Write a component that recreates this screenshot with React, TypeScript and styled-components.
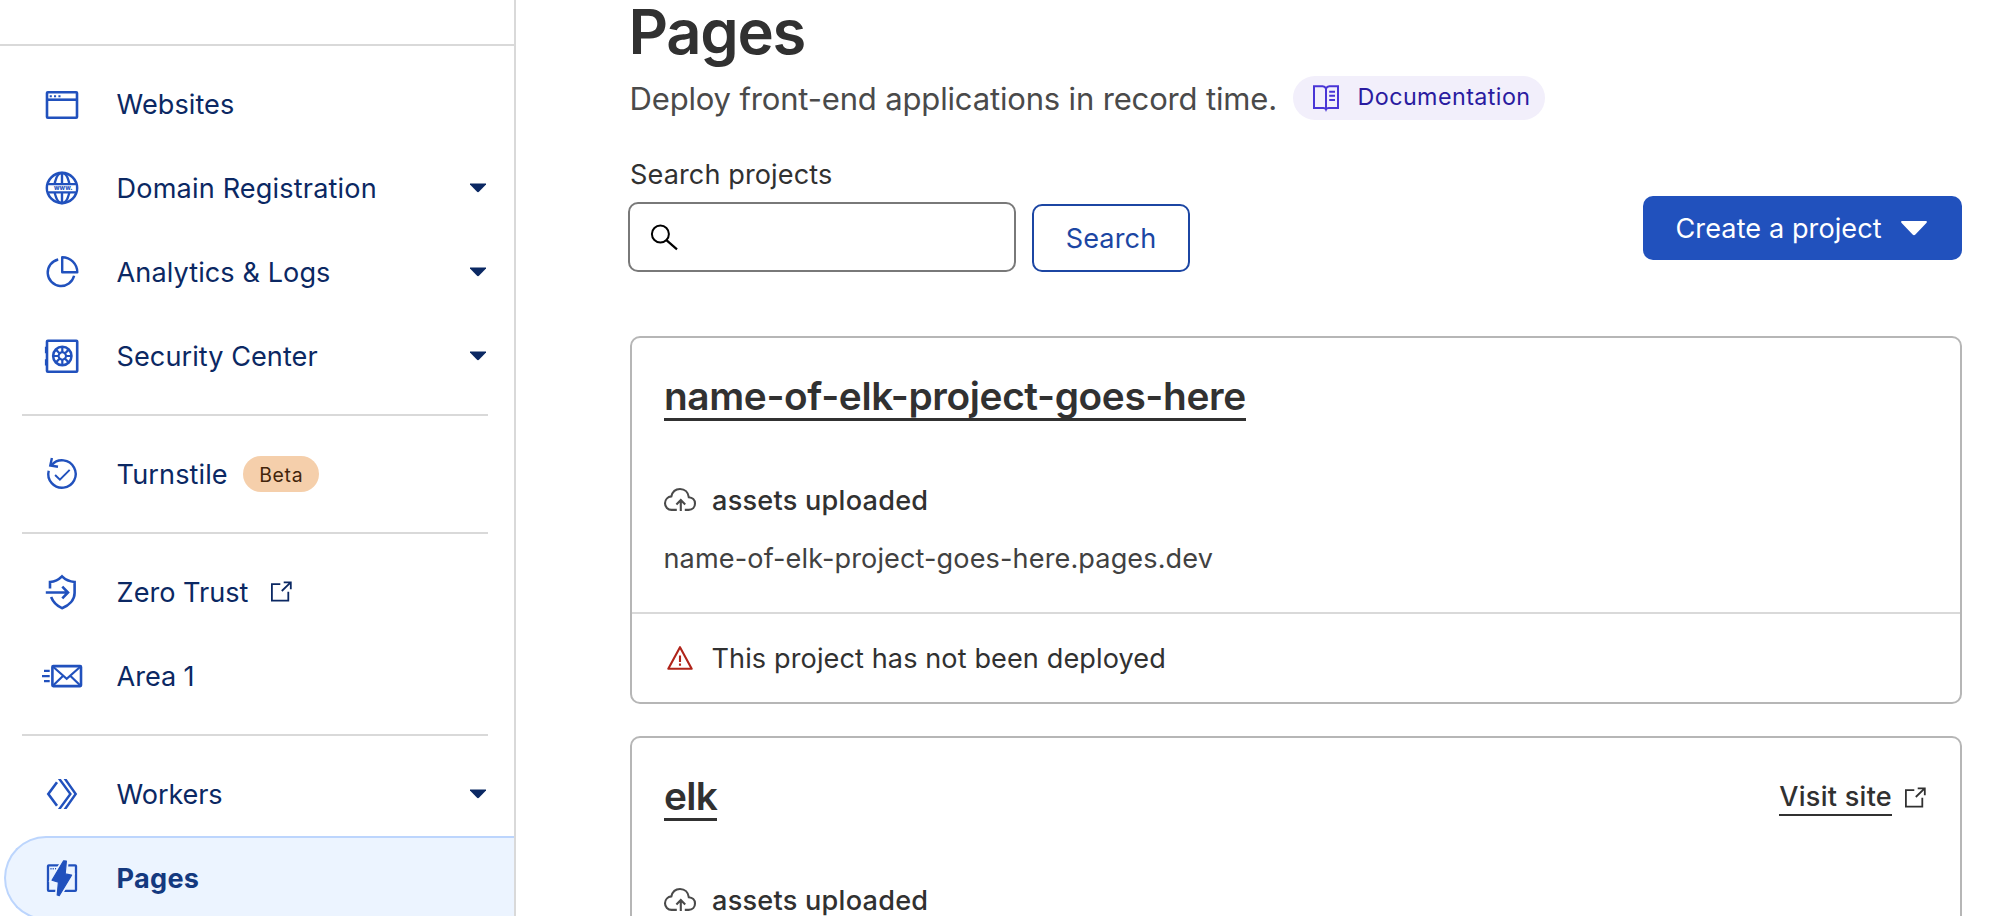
import React from "react";
import styled, { createGlobalStyle } from "styled-components";

const GlobalStyle = createGlobalStyle`
  *, *::before, *::after { box-sizing: border-box; }
  html, body { margin: 0; padding: 0; background: #fff; }
  body {
    font-family: Inter, "Liberation Sans", sans-serif;
    font-size: 27.1px;
    letter-spacing: 0.1px;
    color: #313131;
    overflow: hidden;
  }
  svg { display: block; flex: none; overflow: visible; }
`;

const Page = styled.div`
  display: flex;
  height: 916px;
  overflow: hidden;
`;

/* Sidebar */

const Sidebar = styled.nav`
  width: 516px;
  flex: none;
  border-right: 2px solid #d9d9d9;
  overflow: hidden;
`;

const SidebarTop = styled.div`
  height: 46px;
  border-bottom: 2px solid #d9d9d9;
  margin-bottom: 16px;
`;

const Divider = styled.hr`
  height: 2px;
  margin: 16px 26px 16px 22px;
  border: 0;
  background: #d9d9d9;
`;

const NavItem = styled.a<{ $active?: boolean }>`
  display: flex;
  align-items: center;
  height: 84px;
  margin-left: ${(p) => (p.$active ? "4px" : "0")};
  padding: 0 28px 0 ${(p) => (p.$active ? "35px" : "41px")};
  color: ${(p) => (p.$active ? "#14397f" : "#0b2863")};
  font-weight: ${(p) => (p.$active ? 700 : 400)};
  letter-spacing: ${(p) => (p.$active ? "0.27px" : "inherit")};
  background: ${(p) => (p.$active ? "#ecf4ff" : "transparent")};
  border: ${(p) => (p.$active ? "2px solid #bcd5fd" : "0")};
  border-right: 0;
  border-radius: ${(p) => (p.$active ? "42px 0 0 42px" : "0")};
`;

const NavLabel = styled.span<{ $spacing?: number }>`
  margin-left: 33.6px;
  white-space: nowrap;
  letter-spacing: ${(p) => (p.$spacing === undefined ? "inherit" : `${p.$spacing}px`)};
`;

const Beta = styled.span`
  display: inline-flex;
  align-items: center;
  justify-content: center;
  width: 76px;
  height: 36px;
  margin-left: 15.5px;
  padding-top: 2px;
  border-radius: 18px;
  background: #f5cfab;
  color: #43250b;
  font-size: 19.4px;
  letter-spacing: 0.69px;
`;

const CaretSlot = styled.span`
  margin-left: auto;
`;

const LinkIconSlot = styled.span`
  margin: 0 0 2px 22.5px;
`;

/* Main column */

const Main = styled.main`
  flex: 1;
  padding: 0 44px 0 114px;
`;

const Title = styled.h1`
  margin: 0 0 12px -1.5px;
  font-size: 61.5px;
  line-height: 64px;
  font-weight: 600;
  letter-spacing: -1.3px;
`;

const Intro = styled.div`
  display: flex;
  align-items: center;
  height: 44px;
  gap: 16px;
`;

const Description = styled.p`
  margin: 1px 0 0 -0.5px;
  width: 647.5px;
  font-size: 31px;
  letter-spacing: -0.16px;
  color: #4a4a4a;
  white-space: nowrap;
`;

const DocLink = styled.a`
  display: flex;
  align-items: center;
  gap: 18.5px;
  height: 44px;
  width: 252px;
  padding-left: 20px;
  border-radius: 22px;
  background: #f2effb;
  color: #2a1ba0;
  font-size: 23.3px;
  line-height: 28px;
  letter-spacing: 0.43px;
`;

const DocLabel = styled.span`
  padding-bottom: 2px;
`;

const Toolbar = styled.div`
  display: flex;
  justify-content: space-between;
  margin-top: 36px;
  height: 116px;
`;

const SearchLabel = styled.label`
  display: block;
  padding-top: 1px;
  margin-bottom: 9px;
  line-height: 36px;
`;

const SearchRow = styled.div`
  display: flex;
  align-items: flex-end;
  gap: 16px;
  margin-left: -2px;
`;

const SearchField = styled.div`
  display: flex;
  align-items: center;
  width: 388px;
  height: 70px;
  padding-left: 20px;
  border: 2px solid #797979;
  border-radius: 10px;
`;

const SearchButton = styled.button`
  width: 158px;
  height: 68px;
  padding: 0;
  border: 2px solid #1c46a3;
  border-radius: 10px;
  background: #fff;
  color: #1c46a3;
  font: inherit;
  letter-spacing: 0.14px;
`;

const CreateButton = styled.button`
  display: flex;
  align-items: center;
  gap: 19.5px;
  width: 319px;
  height: 64px;
  margin-top: 40px;
  padding: 0 0 0 32.5px;
  border: 0;
  border-radius: 10px;
  background: #2151bd;
  color: #fff;
  font: inherit;
  letter-spacing: 0.08px;
`;

const Cards = styled.div`
  display: flex;
  flex-direction: column;
  gap: 32px;
  margin-top: 64px;
`;

const Card = styled.section`
  border: 2px solid #b6b6b6;
  border-radius: 10px;
`;

const CardBody = styled.div`
  padding: 36px 32px;
`;

const CardHead = styled.div`
  display: flex;
  justify-content: space-between;
  align-items: flex-start;
`;

const ProjectName = styled.a<{ $spacing: number }>`
  border-bottom: 3px solid #313131;
  font-size: 38.8px;
  line-height: 44px;
  font-weight: 600;
  letter-spacing: ${(p) => p.$spacing}px;
`;

const Visit = styled.div`
  display: flex;
  align-items: center;
  gap: 13px;
  margin: 4px 2px 0 0;
`;

const VisitLink = styled.a`
  border-bottom: 2px solid #313131;
  padding-top: 1px;
  line-height: 35px;
  font-weight: 500;
  letter-spacing: 0.25px;
`;

const Status = styled.div`
  display: flex;
  align-items: center;
  gap: 16px;
  height: 40px;
  margin-top: 59px;
  font-weight: 500;
  letter-spacing: 0.25px;
`;

const Domain = styled.div`
  margin: 21px 0 -1px -0.5px;
  line-height: 36px;
  color: #414141;
  letter-spacing: 0.113px;
`;

const CardFoot = styled.div`
  display: flex;
  align-items: center;
  gap: 18.5px;
  height: 90px;
  padding-left: 35px;
  border-top: 2px solid #d9d9d9;
  letter-spacing: 0.1px;
`;

/* Icons */

const NavSvg = ({ children }: { children: React.ReactNode }) => (
  <svg width="42" height="40" viewBox="-21 -20 42 40" fill="none" stroke="#2151bd" strokeWidth="2.6">
    {children}
  </svg>
);

const WebsitesIcon = () => (
  <NavSvg>
    <rect x="-15" y="-11.7" width="30" height="25.5" rx="0.8" />
    <path d="M-15 -4.3H15" />
    <path d="M-12.3 -7.8h2.1M-8 -7.8h2.1M-3.6 -7.8h2.1" strokeWidth="2" />
  </NavSvg>
);

const GlobeIcon = () => (
  <NavSvg>
    <circle r="15.1" />
    <ellipse rx="7.6" ry="15.1" strokeWidth="2.4" />
    <path d="M0 -15V15" strokeWidth="2.4" />
    <rect x="-13.6" y="-3.6" width="27.2" height="7.8" fill="#fff" stroke="none" />
    <path d="M-15 -3.8H15M-15 4.3H15" strokeWidth="2.3" />
    <text x="-7.9" y="2" fontSize="6.4" fontWeight="800" letterSpacing="0" fill="#2151bd" stroke="none">
      www.
    </text>
  </NavSvg>
);

const PieIcon = () => (
  <NavSvg>
    <path d="M0.2 0.3V-14.8A15.1 15.1 0 0 1 15.3 0.3Z" strokeLinejoin="round" strokeWidth="2.4" />
    <path d="M-3.8 -12.5A13.4 13.4 0 1 0 12.1 3.8" strokeWidth="2.4" />
  </NavSvg>
);

const SafeIcon = () => (
  <NavSvg>
    <rect x="-15" y="-15.3" width="30.2" height="31" rx="0.8" />
    <path d="M-16.4 -9.3V-2.8M-16.4 3.2V9.6" strokeWidth="1.4" />
    <circle cx="0.3" r="9.2" strokeWidth="2.5" />
    <circle cx="0.3" r="3.7" strokeWidth="2.1" />
    <path
      d="M0.3 -9V-4M0.3 9V4M-8.7 0H-3.7M9.3 0H4.3M-6.1 -6.4L-2.5 -2.8M6.7 6.4L3.1 2.8M-6.1 6.4L-2.5 2.8M6.7 -6.4L3.1 -2.8"
      strokeWidth="2.2"
    />
  </NavSvg>
);

const TurnstileIcon = () => (
  <NavSvg>
    <path d="M-13.3 -3.3A13.7 13.7 0 1 0 -10.4 -8.9" strokeWidth="2.4" />
    <path d="M-10.1 -16L-11.7 -8.5L-4 -7.2" strokeWidth="2.4" />
    <path d="M-6.9 1L-2.1 5.6L7.7 -4.1" strokeWidth="2" />
  </NavSvg>
);

const ShieldIcon = () => (
  <NavSvg>
    <path d="M-12 -3.5V-10C-7 -10.4 -3 -12.6 0 -15.6C3 -12.6 8 -10.4 12.6 -10V1C12.6 8 7 13.5 0 16.2C-5 13.8 -9 10 -10.9 5" />
    <path d="M-16.2 0.5H6M0.3 -5.4L6 0.5L0.3 6.4" />
  </NavSvg>
);

const MailIcon = () => (
  <NavSvg>
    <rect x="-9.6" y="-9.9" width="28.6" height="20" rx="0.8" />
    <path d="M-9.2 -9.5L4.7 2.9L18.6 -9.5M-9.2 9.7L1.2 -0.2M18.6 9.7L8.2 -0.2" strokeWidth="2.2" />
    <path d="M-18 -5.2H-12.3M-20 0.1H-12.3M-18 5.2H-12.3" strokeWidth="2.2" />
  </NavSvg>
);

const WorkersIcon = () => (
  <NavSvg>
    <path d="M-5 -11.8L-13.7 0L-5 11.8" />
    <path
      d="M-4.1 -15H-1.1L9.9 0L-1.1 15H-4.1L6.9 0ZM1.6 -15H4.6L15.2 0L4.6 15H1.6L12.2 0Z"
      fill="#2151bd"
      stroke="none"
    />
  </NavSvg>
);

const PagesIcon = () => (
  <NavSvg>
    <rect x="-14" y="-12.7" width="28" height="25.6" rx="0.8" strokeWidth="2.3" />
    <path d="M-11.6 -9.2h1.2M-9.4 -9.2h1.2M-7 -9.2h1.2" strokeWidth="1.4" />
    <path
      d="M1.6 -17.2L4.4 -17L3.2 -4.1L9.6 -2.8L-2.8 17.6L-4.8 17L-3.6 4.2L-10 2.2Z"
      stroke="#ecf4ff"
      strokeWidth="4.6"
    />
    <path
      d="M1.6 -17.2L4.4 -17L3.2 -4.1L9.6 -2.8L-2.8 17.6L-4.8 17L-3.6 4.2L-10 2.2Z"
      fill="#2151bd"
      strokeWidth="1.2"
      strokeLinejoin="round"
    />
  </NavSvg>
);

const Caret = () => (
  <svg width="16" height="10" viewBox="0 0 16 10">
    <path d="M0 0.4H16V1.4L9.2 8.6Q8 9.8 6.8 8.6L0 1.4Z" fill="#0b2863" />
  </svg>
);

const ButtonCaret = () => (
  <svg width="26" height="15" viewBox="0 0 26 15">
    <path d="M0.8 0H25.2Q26.6 0.8 25.6 1.8L14.4 13.6Q13 14.8 11.6 13.6L0.4 1.8Q-0.6 0.8 0.8 0Z" fill="#fff" />
  </svg>
);

const ExternalIcon = () => (
  <svg width="21" height="21" viewBox="0 0 21 21" fill="none" stroke="currentColor" strokeWidth="1.8">
    <path d="M9.3 3.2H0.9V19.7H17.3V10.8" />
    <path d="M12.7 1.3H19.8V8.2M19.4 1.7L10.8 10" />
  </svg>
);

const SearchIcon = () => (
  <svg width="28" height="26" viewBox="0 0 28 26" fill="none" stroke="#000" strokeWidth="2">
    <circle cx="10.4" cy="10" r="8.5" />
    <path d="M16.4 16.1L27 25.3" strokeWidth="2.2" />
  </svg>
);

const BookIcon = () => (
  <svg width="26" height="26" viewBox="0 0 26 26" fill="none" stroke="#4935d6" strokeWidth="2">
    <path d="M13 3.6Q12 1.4 9.6 1.3H1V23H10.4Q12.4 23 13 24.4Q13.6 23 15.6 23H25V1.3H16.4Q14 1.4 13 3.6V24" />
    <path d="M16.2 6.8H22M16.2 10.8H22M16.2 14.9H22" />
  </svg>
);

const CloudIcon = () => (
  <svg width="32" height="24" viewBox="0 0 32 24" fill="none" stroke="#4a4a4a" strokeWidth="2.1">
    <path d="M12.8 21.9H7.6C3.8 21.9 1 19 1 15.3C1 11.6 3.8 8.8 7.4 8.4C8.4 3.8 11.8 1 16 1C20.8 1 24.2 4.2 24.8 9.2C28.4 9.4 31 12 31 15.5C31 19.2 28.5 21.9 24.6 21.9H20.8" />
    <path d="M16.8 23V12.2M12.4 16.4L16.8 12L21.2 16.4" />
  </svg>
);

const WarningIcon = () => (
  <svg width="26" height="24" viewBox="0 0 26 24" fill="none" stroke="#b0241a" strokeWidth="2.1">
    <path d="M13 1.2L24.7 22.8H1.3Z" strokeLinejoin="round" />
    <path d="M13 9.4V16M13 17.6V19.8" />
  </svg>
);

type Item = {
  label: string;
  icon: React.ReactNode;
  spacing?: number;
  caret?: boolean;
  beta?: boolean;
  external?: boolean;
  active?: boolean;
};

const groups: Item[][] = [
  [
    { label: "Websites", icon: <WebsitesIcon />, spacing: 0.05 },
    { label: "Domain Registration", icon: <GlobeIcon />, spacing: 0.16, caret: true },
    { label: "Analytics & Logs", icon: <PieIcon />, spacing: 0.08, caret: true },
    { label: "Security Center", icon: <SafeIcon />, spacing: 0.05, caret: true },
  ],
  [{ label: "Turnstile", icon: <TurnstileIcon />, beta: true }],
  [
    { label: "Zero Trust", icon: <ShieldIcon />, spacing: 0, external: true },
    { label: "Area 1", icon: <MailIcon />, spacing: -0.07 },
  ],
  [
    { label: "Workers", icon: <WorkersIcon />, spacing: -0.12, caret: true },
    { label: "Pages", icon: <PagesIcon />, active: true },
  ],
];

export default function App() {
  return (
    <Page>
      <GlobalStyle />
      <Sidebar>
        <SidebarTop />
        {groups.map((items, index) => (
          <React.Fragment key={index}>
            {index > 0 && <Divider />}
            {items.map((item) => (
              <NavItem key={item.label} $active={item.active}>
                {item.icon}
                <NavLabel $spacing={item.spacing}>{item.label}</NavLabel>
                {item.beta && <Beta>Beta</Beta>}
                {item.external && (
                  <LinkIconSlot>
                    <ExternalIcon />
                  </LinkIconSlot>
                )}
                {item.caret && (
                  <CaretSlot>
                    <Caret />
                  </CaretSlot>
                )}
              </NavItem>
            ))}
          </React.Fragment>
        ))}
      </Sidebar>
      <Main>
        <Title>Pages</Title>
        <Intro>
          <Description>Deploy front-end applications in record time.</Description>
          <DocLink>
            <BookIcon />
            <DocLabel>Documentation</DocLabel>
          </DocLink>
        </Intro>
        <Toolbar>
          <div>
            <SearchLabel>Search projects</SearchLabel>
            <SearchRow>
              <SearchField>
                <SearchIcon />
              </SearchField>
              <SearchButton>Search</SearchButton>
            </SearchRow>
          </div>
          <CreateButton>
            Create a project
            <ButtonCaret />
          </CreateButton>
        </Toolbar>
        <Cards>
          <Card>
            <CardBody>
              <CardHead>
                <ProjectName $spacing={-0.37}>name-of-elk-project-goes-here</ProjectName>
              </CardHead>
              <Status>
                <CloudIcon />
                assets uploaded
              </Status>
              <Domain>name-of-elk-project-goes-here.pages.dev</Domain>
            </CardBody>
            <CardFoot>
              <WarningIcon />
              This project has not been deployed
            </CardFoot>
          </Card>
          <Card>
            <CardBody>
              <CardHead>
                <ProjectName $spacing={-0.7}>elk</ProjectName>
                <Visit>
                  <VisitLink>Visit site</VisitLink>
                  <ExternalIcon />
                </Visit>
              </CardHead>
              <Status>
                <CloudIcon />
                assets uploaded
              </Status>
            </CardBody>
          </Card>
        </Cards>
      </Main>
    </Page>
  );
}
